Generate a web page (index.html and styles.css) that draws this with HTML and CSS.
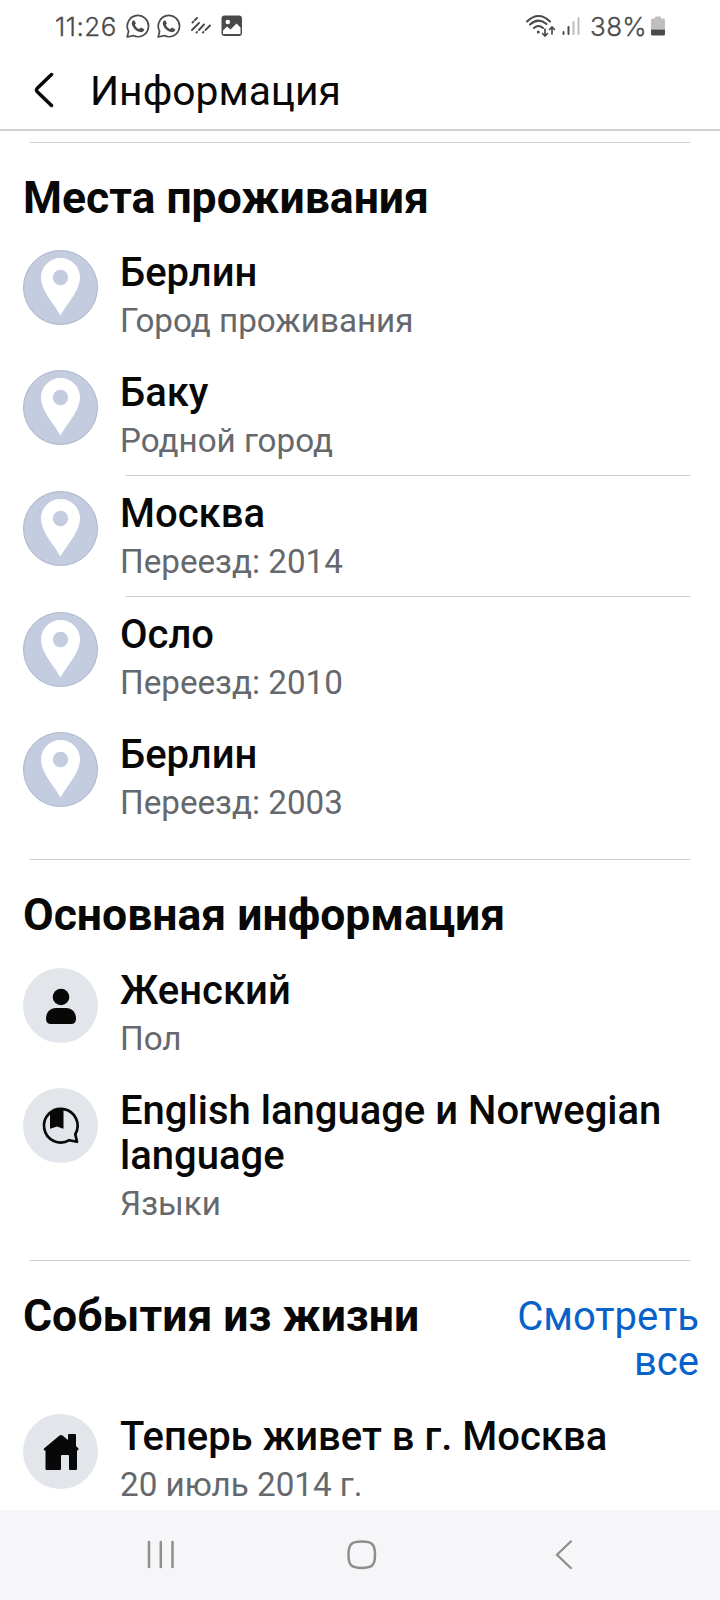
FILE: index.html
```html
<!DOCTYPE html>
<html lang="ru">
<head>
    <meta charset="UTF-8">
    <meta name="viewport" content="width=device-width, initial-scale=1.0">
    <title>Информация</title>
    <link rel="stylesheet" href="styles.css">
</head>
<body>
    <svg class="defs" width="0" height="0">
        <symbol id="chat" viewBox="0 0 24 24">
            <path d="M1.2 23 2.6 17.2A10.6 10.6 0 1 1 7.2 21.6Z" fill="none" stroke="#4a4a4a" stroke-width="1.7" stroke-linejoin="round"/>
            <path d="M8.3 6.2 9.9 9.5 8.8 11C9.8 13 11.2 14.3 13.3 15.1L14.9 13.6 18.3 15.2C18 17.6 16 18.6 14 18.1 10 17.2 6.4 13.7 5.8 9.8 5.6 7.8 6.8 6.3 8.3 6.2Z" fill="#4a4a4a"/>
        </symbol>
        <symbol id="pin" viewBox="0 0 75 75">
            <circle cx="37.5" cy="37.5" r="37" fill="#c4cce0" stroke="#aab6cb"/>
            <path d="M37.5 65.5C32 55 18 41 18 27.5a19.5 19.5 0 0 1 39 0C57 41 43 55 37.5 65.5Z" fill="#fff"/>
            <circle cx="37.5" cy="27.5" r="7.7" fill="#c4cce0"/>
        </symbol>
    </svg>

    <div class="status-bar">
        <span class="time">11:26</span>
        <svg class="chat-icon" width="24" height="24"><use href="#chat"/></svg>
        <svg class="chat-icon" width="24" height="24"><use href="#chat"/></svg>
        <svg class="lines-icon" width="22" height="18" viewBox="0 0 22 18" fill="none" stroke="#4a4a4a" stroke-width="1.9" stroke-linecap="round">
            <path d="M2.5 5.5 3.5 4.5M5 3 7 1M2 13 9 6M6.5 15.5 7 15M9 13 14 7.5M13 15.5 13.5 15M15.5 13 20 8.5"/>
        </svg>
        <svg class="image-icon" width="22" height="22" viewBox="0 0 22 22">
            <rect x="0.5" y="0.5" width="20.5" height="20.5" rx="3" fill="#4a4a4a"/>
            <circle cx="6.8" cy="7" r="2.3" fill="#fff"/>
            <path d="M2 15.5 6 11.5 9.5 14.5 15.5 8.5 19.5 12.5V19H2Z" fill="#fff"/>
        </svg>
        <div class="status-right">
            <svg width="31" height="24" viewBox="0 0 31 24" fill="none" stroke="#4a4a4a" stroke-width="2" stroke-linecap="round">
                <path d="M2 7.5Q13.5-3.5 25 7.5M5 10.5Q13.5 3 21.5 10M9 14Q13.5 10 18 14"/>
                <circle cx="13.3" cy="18" r="1.5" fill="#4a4a4a" stroke="none"/>
                <path d="M20 15V22M17.5 19.5 20 22 22.5 19.5M27 20V13M24.5 15.5 27 13 29.5 15.5" stroke-width="1.7"/>
            </svg>
            <svg class="signal-icon" width="18" height="20" viewBox="0 0 18 20" stroke-width="2" stroke-linecap="round">
                <path d="M1.5 16V18M6.5 11V18" stroke="#4a4a4a"/>
                <path d="M11.5 6V18M16.5 2V18" stroke="#bdbdbd"/>
            </svg>
            <span class="percent">38%</span>
            <svg class="battery-icon" width="14" height="20" viewBox="0 0 14 20">
                <path d="M0 13.5V4Q0 2.5 1.5 2.5H4V1.5Q4 .5 5 .5H9Q10 .5 10 1.5V2.5H12.5Q14 2.5 14 4V13.5Z" fill="#bfbfbf"/>
                <path d="M0 13.5H14V18Q14 19.5 12.5 19.5H1.5Q0 19.5 0 18Z" fill="#4a4a4a"/>
            </svg>
        </div>
    </div>

    <header class="app-bar">
        <svg width="20" height="36" viewBox="0 0 20 36" fill="none" stroke="#080809" stroke-width="3.5" stroke-linecap="round" stroke-linejoin="round">
            <path d="M17.5 2.5 3.5 16Q1.5 18 3.5 20L17.5 33.5"/>
        </svg>
        <h1>Информация</h1>
    </header>

    <main class="content">
        <section class="section places">
            <div class="section-header">
                <h2>Места проживания</h2>
            </div>
            <div class="row">
                <svg class="avatar"><use href="#pin"/></svg>
                <div class="text">
                    <div class="name">Берлин</div>
                    <div class="note">Город проживания</div>
                </div>
            </div>
            <div class="row">
                <svg class="avatar"><use href="#pin"/></svg>
                <div class="text">
                    <div class="name">Баку</div>
                    <div class="note">Родной город</div>
                </div>
            </div>
            <hr class="row-line">
            <div class="row">
                <svg class="avatar"><use href="#pin"/></svg>
                <div class="text">
                    <div class="name">Москва</div>
                    <div class="note">Переезд: 2014</div>
                </div>
            </div>
            <hr class="row-line">
            <div class="row">
                <svg class="avatar"><use href="#pin"/></svg>
                <div class="text">
                    <div class="name">Осло</div>
                    <div class="note">Переезд: 2010</div>
                </div>
            </div>
            <div class="row">
                <svg class="avatar"><use href="#pin"/></svg>
                <div class="text">
                    <div class="name">Берлин</div>
                    <div class="note">Переезд: 2003</div>
                </div>
            </div>
        </section>

        <section class="section">
            <div class="section-header">
                <h2>Основная информация</h2>
            </div>
            <div class="row">
                <svg class="avatar" viewBox="0 0 75 75">
                    <circle cx="37.5" cy="37.5" r="37.5" fill="#e2e5ea"/>
                    <circle cx="38" cy="29" r="8.3" fill="#080809"/>
                    <path d="M33 40H43C49 40 53 44.5 53 50.5Q53 56 48 56H28Q23 56 23 50.5C23 44.5 27 40 33 40Z" fill="#080809"/>
                </svg>
                <div class="text">
                    <div class="name">Женский</div>
                    <div class="note">Пол</div>
                </div>
            </div>
            <div class="row">
                <svg class="avatar" viewBox="0 0 75 75">
                    <circle cx="37.5" cy="37.5" r="37.5" fill="#e2e5ea"/>
                    <path d="M52.3 46.2A16.8 16.8 0 1 0 46.3 52.2L54 53.8Z" fill="none" stroke="#080809" stroke-width="2.7" stroke-linejoin="round"/>
                    <path d="M27 24.5Q33 20 40.5 21V40Q40.5 41 39.5 40.5L34 38.5 28 40.5Q27 41 27 40Z" fill="#080809"/>
                </svg>
                <div class="text">
                    <div class="name">English language и Norwegian language</div>
                    <div class="note">Языки</div>
                </div>
            </div>
        </section>

        <section class="section">
            <div class="section-header">
                <h2>События из жизни</h2>
                <a class="see-all">Смотреть все</a>
            </div>
            <div class="row">
                <svg class="avatar" viewBox="0 0 75 75">
                    <circle cx="37.5" cy="37.5" r="37.5" fill="#e2e5ea"/>
                    <path d="M21 34.5 36.5 21.5Q38 20.5 39.5 21.5L45 26V21Q45 20 46 20H52Q53 20 53 21V32L55.5 34.5Q56 36.5 54 36.5V55Q54 56 53 56H47Q46 56 46 55V42Q46 41 45 41H39Q38 41 38 42V55Q38 56 37 56H23.5Q22.5 56 22.5 55V36.5Q20 36.5 21 34.5Z" fill="#080809"/>
                </svg>
                <div class="text">
                    <div class="name">Теперь живет в г. Москва</div>
                    <div class="note">20 июль 2014 г.</div>
                </div>
            </div>
        </section>
    </main>

    <nav class="nav-bar">
        <svg width="28" height="30" viewBox="0 0 28 30" stroke="#8e8e8f" stroke-width="2.5" stroke-linecap="round">
            <path d="M2 2V27M13.8 2V27M25.5 2V27"/>
        </svg>
        <svg width="30" height="30" viewBox="0 0 30 30">
            <path d="M14.75 1.5C25.5 1.5 28 4.5 28 14.75S25.5 28 14.75 28 1.5 25 1.5 14.75 4 1.5 14.75 1.5Z" fill="none" stroke="#8e8e8f" stroke-width="2.5"/>
        </svg>
        <svg width="18" height="30" viewBox="0 0 18 30" fill="none" stroke="#8e8e8f" stroke-width="2.3" stroke-linecap="round">
            <path d="M15.8 1.5 2 14.75 15.8 28"/>
        </svg>
    </nav>
</body>
</html>
```
FILE: styles.css
```css
* {
    box-sizing: border-box;
}

body {
    margin: 0;
    height: 1600px;
    display: flex;
    flex-direction: column;
    overflow: hidden;
    font-family: Roboto, "Noto Sans", sans-serif;
    background-color: #fff;
    color: #080809;
}

svg {
    display: block;
    flex-shrink: 0;
}

.defs {
    position: absolute;
}

h1, h2 {
    margin: 0;
}

.status-bar {
    height: 53px;
    flex-shrink: 0;
    display: flex;
    align-items: center;
    padding: 0 55px 1px;
    font-family: Inter, sans-serif;
    font-size: 26px;
    font-weight: 300;
    color: #4a4a4a;
}

.time {
    width: 71px;
    letter-spacing: 0.5px;
    -webkit-text-stroke: 0.3px #4a4a4a;
}

.chat-icon {
    margin-right: 7px;
}

.lines-icon {
    margin-left: 2px;
}

.image-icon {
    margin-left: 9px;
}

.status-right {
    margin-left: auto;
    display: flex;
    align-items: center;
}

.signal-icon {
    margin-left: 6px;
}

.percent {
    margin-left: 10px;
    letter-spacing: 0.3px;
    -webkit-text-stroke: 0.3px #4a4a4a;
}

.battery-icon {
    margin-left: 4px;
}

.app-bar {
    height: 78px;
    flex-shrink: 0;
    display: flex;
    align-items: center;
    padding: 0 34px 2px;
    border-bottom: 2px solid #ced0d4;
}

.app-bar h1 {
    margin: 1px 0 0 36px;
    font-size: 40.8px;
    font-weight: 400;
    line-height: 48px;
}

.content {
    flex: 1;
    min-height: 0;
    overflow: hidden;
    padding-top: 11px;
}

.section {
    padding-bottom: 22px;
}

.section::before {
    content: "";
    display: block;
    height: 1px;
    margin: 0 30px;
    background-color: #ced0d4;
}

.section-header {
    display: flex;
    justify-content: space-between;
    align-items: flex-start;
    padding: 32px 21px 15px 23px;
}

.places .section-header {
    padding-bottom: 13px;
}

.section-header h2 {
    margin-bottom: -1px;
    font-size: 44.5px;
    font-weight: 700;
    line-height: 47px;
}

.places h2 {
    margin-bottom: 0;
}

.see-all {
    width: 190px;
    margin-top: 1px;
    font-size: 40px;
    line-height: 45px;
    text-align: right;
    color: #0862c9;
}

.row {
    display: flex;
    padding: 15px 23px;
}

.avatar {
    width: 75px;
    height: 75px;
}

.text {
    margin-left: 22px;
}

.name {
    font-size: 40px;
    font-weight: 500;
    line-height: 45px;
}

.note {
    margin-top: 6px;
    font-size: 33.2px;
    line-height: 39px;
    color: #65686c;
}

.row-line {
    height: 1px;
    margin: 0 30px 0 126px;
    border: none;
    background-color: #ced0d4;
}

.places .section-header h2 {
    margin-bottom: 0;
}

.nav-bar {
    height: 90px;
    flex-shrink: 0;
    display: flex;
    justify-content: space-between;
    align-items: center;
    padding: 0 147px;
    background-color: #f6f6f8;
}

.nav-bar svg:nth-child(2) {
    margin-right: 6px;
}
```
